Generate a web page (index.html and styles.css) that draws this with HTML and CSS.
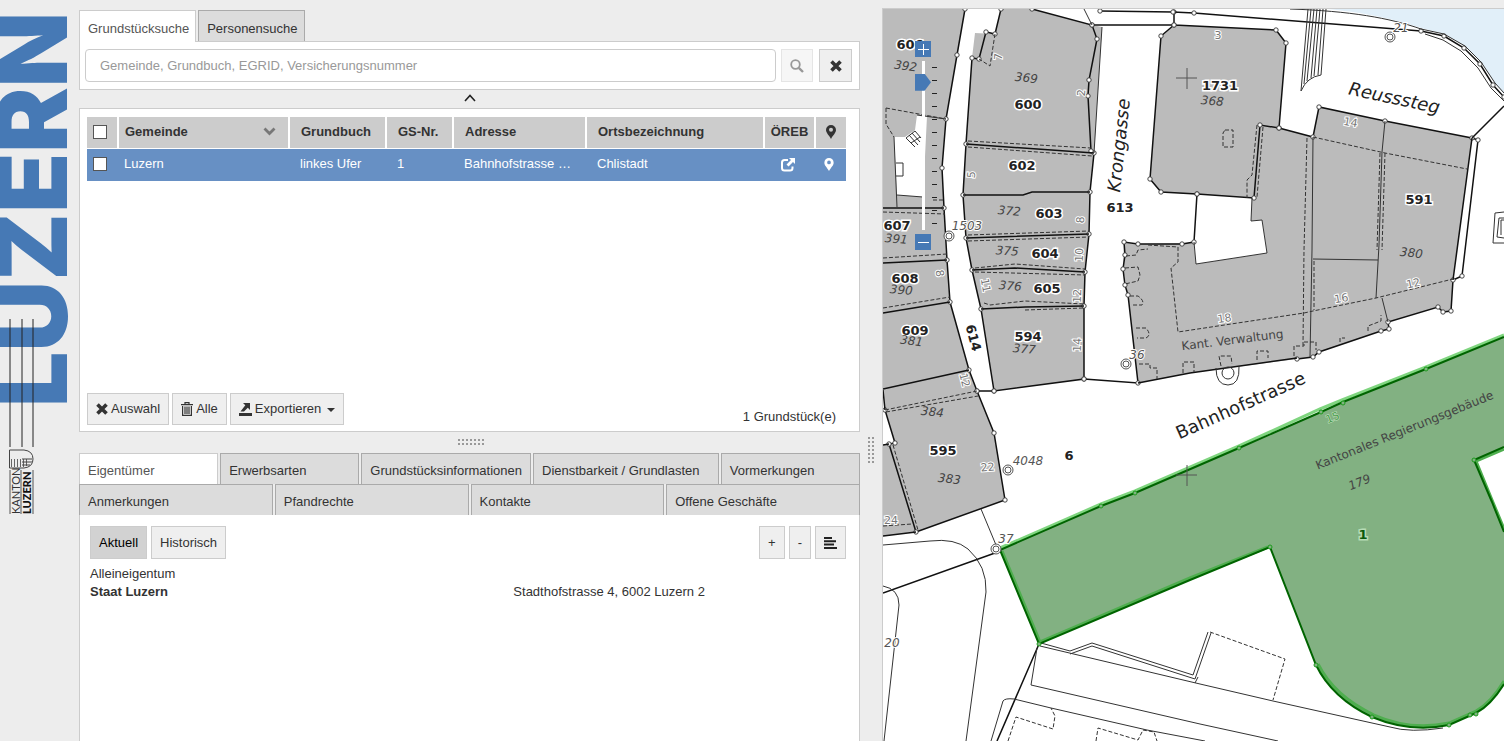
FILE: index.html
```html
<!DOCTYPE html>
<html lang="de">
<head>
	<meta charset="UTF-8">
	<title>Grundstücksuche - Kanton Luzern</title>
	<link rel="stylesheet" href="styles.css">
</head>
<body>
	<div class="page">
		<div class="logo">
			<svg width="79" height="530" viewBox="0 0 79 530" role="img" aria-label="Kanton Luzern">
				<text class="logo-big" transform="translate(67 407) rotate(-90)">LUZERN</text>
				<path d="M10 319V447M22 319V447M33 319V447" stroke="#222" stroke-width="1" fill="none"/>
				<path d="M9.500 450H24Q33 451 33 459Q33 467 24 468H9.500Z" fill="none" stroke="#444"/>
				<path d="M11.500 459V467M14.500 459V467M17.500 459V467M20.500 459V467M23.500 459V467M26.500 459V466" stroke="#666" fill="none"/>
				<path d="M22 459H32M22 462H32M22 465H30" stroke="#444" fill="none"/>
				<path d="M10 470V514M21 470V514M33 470V514" stroke="#555" fill="none"/>
				<text class="logo-thin" transform="translate(20 514) rotate(-90)">KANTON</text>
				<text class="logo-bold" transform="translate(31 514) rotate(-90)">LUZERN</text>
			</svg>
		</div>

		<div class="left">
			<div class="tabs">
				<button class="tab active">Grundstücksuche</button>
				<button class="tab">Personensuche</button>
			</div>
			<form class="search">
				<input type="text" class="search-input" aria-label="Suche" placeholder="Gemeinde, Grundbuch, EGRID, Versicherungsnummer">
				<button type="button" class="btn icon-btn" aria-label="Suchen" disabled>
					<svg width="14" height="14" viewBox="0 0 14 14"><circle cx="5.500" cy="5.500" r="4.300" fill="none" stroke="#333" stroke-width="1.800"/><path d="M8.800 8.800L13 13" stroke="#333" stroke-width="2.400"/></svg>
				</button>
				<button type="button" class="btn icon-btn clear" aria-label="Löschen">
					<svg width="12" height="12" viewBox="0 0 12 12"><path d="M1.500 1.500L10.500 10.500M10.500 1.500L1.500 10.500" stroke="#333" stroke-width="3.600"/></svg>
				</button>
			</form>
			<button class="collapse" aria-label="Suche einklappen">
				<svg width="12" height="8" viewBox="0 0 12 8"><path d="M1 7L6 1.500L11 7" fill="none" stroke="#222" stroke-width="1.600"/></svg>
			</button>

			<div class="results">
				<table class="grid">
					<colgroup>
						<col class="c-check"><col class="c-gem"><col class="c-gb"><col class="c-nr"><col class="c-adr"><col class="c-ort"><col class="c-oreb"><col class="c-pin">
					</colgroup>
					<thead>
						<tr>
							<th class="check"><input type="checkbox" aria-label="Alle auswählen"></th>
							<th class="first">Gemeinde
								<svg class="sort" width="13" height="9" viewBox="0 0 13 9"><path d="M1.500 1.500L6.500 6.500L11.500 1.500" fill="none" stroke="#777" stroke-width="2.800"/></svg>
							</th>
							<th>Grundbuch</th>
							<th>GS-Nr.</th>
							<th>Adresse</th>
							<th>Ortsbezeichnung</th>
							<th class="mid">ÖREB</th>
							<th class="mid"><svg width="10" height="14" viewBox="0 0 10 14"><path fill-rule="evenodd" d="M5 0A5 5 0 0 0 0 5C0 8 3 10 5 14C7 10 10 8 10 5A5 5 0 0 0 5 0ZM5 2.800A2 2 0 1 1 5 6.800A2 2 0 1 1 5 2.800Z" fill="#333"/></svg></th>
						</tr>
					</thead>
					<tbody>
						<tr>
							<td class="check"><input type="checkbox" aria-label="Luzern 1 auswählen"></td>
							<td class="first">Luzern</td>
							<td>linkes Ufer</td>
							<td>1</td>
							<td>Bahnhofstrasse …</td>
							<td>Chlistadt</td>
							<td class="mid"><svg width="14" height="14" viewBox="0 0 14 14"><path d="M7 2H3.500Q1 2 1 4.500V10Q1 12.500 3.500 12.500H9Q11.500 12.500 11.500 10V8.500" fill="none" stroke="#fff" stroke-width="2"/><path d="M8 0H14V6L12 4L7.500 8.500L5.500 6.500L10 2Z" fill="#fff"/></svg></td>
							<td class="mid"><svg width="10" height="13" viewBox="0 0 10 14"><path fill-rule="evenodd" d="M5 0A5 5 0 0 0 0 5C0 8 3 10 5 14C7 10 10 8 10 5A5 5 0 0 0 5 0ZM5 2.800A2 2 0 1 1 5 6.800A2 2 0 1 1 5 2.800Z" fill="#fff"/></svg></td>
						</tr>
					</tbody>
				</table>
				<div class="results-footer">
					<button class="btn">
						<svg width="12" height="12" viewBox="0 0 12 12"><path d="M1.500 1.500L10.500 10.500M10.500 1.500L1.500 10.500" stroke="#333" stroke-width="3.600"/></svg>
						Auswahl
					</button>
					<button class="btn">
						<svg width="12" height="14" viewBox="0 0 12 14"><path d="M4 2V.600H8V2M0 2.600H12M1.600 4V13.300H10.400V4M4 4.500V12M6 4.500V12M8 4.500V12" fill="none" stroke="#333" stroke-width="1.200"/></svg>
						Alle
					</button>
					<button class="btn">
						<svg width="13" height="13" viewBox="0 0 13 13"><path d="M0 10H13V13H0ZM4 0H11V7L8.800 4.800L5 8.600H1.500L6.300 2.300Z" fill="#333"/></svg>
						Exportieren
						<svg class="caret" width="8" height="4" viewBox="0 0 8 4"><path d="M0 0H8L4 4Z" fill="#333"/></svg>
					</button>
					<span class="count">1 Grundstück(e)</span>
				</div>
			</div>

			<div class="split-h"><span class="grip"></span></div>

			<div class="detail-tabs">
				<div class="tab-row row-a">
					<button class="dtab active">Eigentümer</button>
					<button class="dtab">Erwerbsarten</button>
					<button class="dtab">Grundstücksinformationen</button>
					<button class="dtab">Dienstbarkeit / Grundlasten</button>
					<button class="dtab">Vormerkungen</button>
				</div>
				<div class="tab-row row-b">
					<button class="dtab">Anmerkungen</button>
					<button class="dtab">Pfandrechte</button>
					<button class="dtab">Kontakte</button>
					<button class="dtab">Offene Geschäfte</button>
				</div>
			</div>
			<div class="detail">
				<div class="detail-bar">
					<button class="btn pressed">Aktuell</button>
					<button class="btn">Historisch</button>
					<span class="spacer"></span>
					<button class="btn">+</button>
					<button class="btn">-</button>
					<button class="btn" aria-label="Liste">
						<svg width="13" height="12" viewBox="0 0 13 12"><path d="M0 1H8M0 4.300H12M0 7.600H10M0 11H13" stroke="#222" stroke-width="2" fill="none"/></svg>
					</button>
				</div>
				<div class="owner">
					<div>Alleineigentum</div>
					<div class="owner-row"><b>Staat Luzern</b><span>Stadthofstrasse 4, 6002 Luzern 2</span></div>
				</div>
			</div>
		</div>

		<div class="split-v"><span class="grip grip-v"></span></div>

		<div class="map">
			<svg class="plan" viewBox="883 9 621 732" preserveAspectRatio="xMinYMin slice">
				<defs>
					<marker id="pt" markerUnits="userSpaceOnUse" markerWidth="8" markerHeight="8" refX="4" refY="4"><circle cx="4" cy="4" r="2.200" fill="#fff" stroke="#333" stroke-width=".9"/></marker>
				</defs>

				<!-- Reuss -->
				<path class="water" d="M1327 9C1370 13 1395 20 1421 28L1444 34L1465 46L1481 62L1495 83L1504 94V9Z"/>

				<!-- buildings -->
				<path class="house" d="M883 9H965L957 55L946 119L942 168L944 208L947 260L950 302L969 370L977 391L994 433L1005 500L916 532L883 536V445L895 443L885 410L883 390Z"/>
				<path class="house" d="M1001 9L995 34L975 33L972 58L966 144L963 195L966 238L972 270L981 309L994 391L1084 379V306L1085 272L1089 234L1090 192L1094 153L1102 27L1092 25L1032 9Z"/>
				<path class="house" d="M1161 36L1174 25L1276 30L1286 43L1279 128L1313 137L1319 107L1385 121L1472 138L1453 280L1451 311L1443 312L1438 307L1388 322L1389 329L1381 331L1319 352L1313 357L1297 359L1190 373L1138 383L1128 295L1123 269L1124 242L1138 244L1194 243L1196 264L1267 253L1262 220L1251 221L1252 198L1161 192L1150 179Z"/>
				<path class="yard" d="M1197 194L1252 198L1251 221L1262 220L1267 253L1196 264L1194 242Z"/>
				<path class="yard" d="M894 137H905L915 130L917 115L927 116L923 197L897 195Z"/>

				<!-- parcel boundaries -->
				<g class="line pts">
					<path d="M965 9L957 55L946 119L942 168L944 208L947 260L950 302L969 370L977 391L994 433L1005 500L916 532L889 444L895 443L885 410"/>
					<path d="M1001 9L995 34L986 32L979 59L972 58L966 144L963 195L966 238L972 270L981 309L994 391L1084 379V306L1085 272L1089 234L1090 192L1094 153L1091 151L1088 96L1089 80L1097 39L1092 25L1032 9"/>
					<path d="M1092 25H1174L1276 30L1286 43L1279 128L1260 125L1254 198L1197 194L1161 192L1150 179L1161 36L1174 25V12"/>
					<path d="M1279 128L1313 137L1319 107L1385 121L1472 138L1478 140L1462 276L1453 280L1451 311L1443 312L1438 307L1388 322L1389 329L1381 331L1319 352L1313 357L1297 359"/>
					<path d="M1100 11L1173 12L1194 13L1421 31L1444 36L1464 48L1480 64L1493 85L1504 97"/>
					<path d="M977 391L994 391M1084 379L1138 383L1128 295L1125 285L1123 269L1125 255L1124 242L1138 244H1182L1194 242L1197 194"/>
				</g>
				<g class="line">
					<path d="M1138 383L1190 373L1297 358M1472 138L1504 106M1472 138L1453 280"/>
					<path d="M883 208H944M883 263L947 260M883 313L950 302M883 389L969 370M883 390L885 410M883 536L916 532M883 445L889 444"/>
					<path d="M966 144L1094 153M963 195H1023L1032 192H1090M966 238L1089 234M972 270L1015 268L1085 272M981 309L1025 307L1084 306"/>
					<path d="M883 593L995 553M1039 644L997 741"/>
				</g>
				<g class="thin">
					<path d="M1102 27L1094 153M894 137L897 207M897 195L923 197M896 163H903V176H896M917 115L946 119M1092 25L1084 9"/>
					<path d="M1313 137L1312 250L1310 357M1385 121L1382 152L1379 245L1376 298M1313 259L1378 260M1382 298L1388 322"/>
					<path d="M1252 198L1251 221L1262 220L1267 253L1196 264L1194 242"/>
					<path d="M906 138L915 147M909 135L918 145M912 133L920 142M915 131L921 138M906 138L915 131M911 143L920 137"/>
					<path d="M1290 9C1350 11 1390 18 1421 29L1444 34L1465 46L1481 62L1495 83L1504 93"/>
					<path d="M1425 34L1443 40L1461 51L1478 68L1491 88L1504 101"/>
					<path d="M1308 9L1301 91Q1307 77 1321 75L1326 9M1311 9L1304 84M1314 9L1307 81M1317 9L1311 78M1320 9L1314 76M1323 9L1318 75"/>
					<path d="M883 545L930 541Q955 538 968 549Q987 566 986 592L966 741M883 586Q899 589 899 605L884 741M981 509L996 545"/>
					<path d="M1037 648L1031 685L1200 724L1278 741M1041 643L1070 651L1092 643L1193 675L1208 632M1070 654L1092 646L1195 679L1211 633M1040 646L1200 684L1273 701L1390 727Q1410 733 1443 728M1195 683L1198 677"/>
					<path d="M991 741L1003 701Q1005 698 1014 699L1051 708L1147 730L1205 741"/>
					<path d="M1216 368Q1216 385 1228 385Q1240 385 1239 366"/>
					<circle cx="1228" cy="373" r="6"/>
					<path d="M1504 212L1495 213L1493 243H1504M1504 218H1499L1497 237L1504 238M1504 220H1501V235"/>
				</g>
				<g class="dash">
					<path d="M883 212L945 214M883 258L947 254M883 308L950 297M885 410L977 391M886 412L978 396M886 108L946 119M886 108V124L894 137M933 200H943M893 445L918 530M883 526L912 524"/>
					<path d="M995 34L990 66L979 59M968 141L1091 148M968 147L1092 156M968 235L1089 231M968 241L1089 237M975 268L1015 264L1085 269M975 272L1085 275M984 303L990 305L1025 301L1084 304M1025 310L1084 308"/>
					<path d="M1257 125L1252 175L1247 180V198M1263 127L1257 197M1225 130H1233V147H1223V133ZM1307 138L1304 250L1303 345M1380 153L1377 250M1385 153L1382 250M1313 137L1385 153L1467 169M1314 261V310"/>
					<path d="M1148 245L1178 247V262L1171 268L1178 332L1304 313L1313 311L1376 298L1453 279"/>
					<path d="M1126 256L1136 255L1138 250L1148 249M1125 268L1138 267L1140 275L1138 281L1125 284M1130 296H1138Q1145 301 1142 305H1131M1136 328H1146Q1152 335 1146 338H1137M1139 364H1150V368H1157V379M1183 373V362H1194V372M1221 366L1219 356H1231L1232 364M1257 360V351H1268V358M1294 356V346H1304V342H1316V350M1368 331V326L1381 321V315M1340 342V338H1345"/>
					<path d="M1210 632L1285 659L1273 700M1008 741L1016 717L1053 729L1055 716L1051 708M1096 741L1098 728L1138 740L1143 730L1154 732L1157 741"/>
				</g>

				<!-- selected parcel -->
				<path class="sel" d="M1000 550L1101 506L1135 493L1239 448L1321 412L1343 402L1426 369L1504 337L1520 330V440L1504 447L1474 460L1492 502L1504 532L1520 570V665L1504 683Q1491 705 1476 713L1449 725Q1410 733 1372 717Q1332 698 1316 665L1270 547L1190 580L1039 644Z"/>
				<path class="sel-glow" d="M1000 548L1101 504L1135 491L1239 446L1320 409L1342 400L1426 367L1504 335"/>
				<path class="sel-glow inner" d="M1504 449L1476 461L1492 500L1504 529M1504 681Q1491 703 1476 711L1449 723Q1410 731 1374 715Q1334 696 1318 664M1268 547L1190 578L1040 642L1002 551"/>
				<path class="sel-line" d="M1504 532L1492 502L1474 460L1504 447M1504 337L1426 369L1343 402L1321 412L1239 448L1135 493L1101 506L1000 550L1039 644L1190 580L1270 547L1316 665Q1332 698 1372 717Q1410 733 1449 725L1476 713Q1491 705 1504 684"/>
				<g class="sel-pts">
					<circle cx="1101" cy="506" r="2"/><circle cx="1135" cy="493" r="2"/><circle cx="1239" cy="448" r="2"/><circle cx="1321" cy="412" r="2"/><circle cx="1343" cy="403" r="2"/><circle cx="1426" cy="369" r="2"/><circle cx="1474" cy="460" r="2"/><circle cx="1270" cy="547" r="2"/><circle cx="1316" cy="665" r="2"/><circle cx="1372" cy="717" r="2"/><circle cx="1449" cy="725" r="2"/><circle cx="1470" cy="715" r="2"/><circle cx="1476" cy="714" r="2"/><circle cx="1039" cy="644" r="2"/>
				</g>
				<path class="cross" d="M1176 78H1197M1187 68V89M1176 475H1197M1187 465V486"/>

				<!-- survey points -->
				<g class="survey">
					<circle cx="949" cy="236" r="5"/><circle cx="949" cy="236" r="3"/>
					<circle cx="1126" cy="364" r="5"/><circle cx="1126" cy="364" r="3"/>
					<circle cx="1008" cy="470" r="5"/><circle cx="1008" cy="470" r="3"/>
					<circle cx="996" cy="549" r="5"/><circle cx="996" cy="549" r="3"/>
					<circle cx="1390" cy="37" r="5"/><circle cx="1390" cy="37" r="3"/>
				</g>

				<g class="parcel">
					<text x="910" y="49">606</text><text x="1028" y="109">600</text><text x="1022" y="170">602</text>
					<text x="1049" y="218">603</text><text x="1045" y="258">604</text><text x="1047" y="293">605</text>
					<text x="1028" y="341">594</text><text x="897" y="230">607</text><text x="905" y="283">608</text>
					<text x="915" y="335">609</text><text x="943" y="455">595</text><text x="1220" y="90">1731</text>
					<text x="1120" y="212">613</text><text x="1419" y="204">591</text><text x="1069" y="460">6</text>
					<text transform="translate(969 339) rotate(75)">614</text>
				</g>
				<text class="parcel-sel" x="1363" y="539">1</text>

				<g class="no">
					<text transform="translate(905 70) rotate(8)">392</text><text transform="translate(1026 82) rotate(6)">369</text>
					<text transform="translate(1009 215) rotate(5)">372</text><text transform="translate(1007 255) rotate(4)">375</text>
					<text transform="translate(1010 290) rotate(5)">376</text><text transform="translate(1024 353) rotate(5)">377</text>
					<text transform="translate(896 243) rotate(5)">391</text><text transform="translate(901 294) rotate(5)">390</text>
					<text transform="translate(911 345) rotate(7)">381</text><text transform="translate(932 416) rotate(6)">384</text>
					<text transform="translate(949 483) rotate(6)">383</text><text transform="translate(1212 105) rotate(5)">368</text>
					<text transform="translate(1411 257) rotate(6)">380</text><text transform="translate(1361 486) rotate(-22)">179</text>
				</g>
				<g class="survey-no">
					<text x="967" y="230">1503</text><text x="1137" y="359">36</text><text x="1028" y="465">4048</text><text x="1006" y="543">37</text><text x="1401" y="32">21</text><text x="892" y="647">20</text>
				</g>
				<g class="addr">
					<text transform="translate(1002 57) rotate(-85)">7</text><text transform="translate(1085 93) rotate(-85)">2</text>
					<text transform="translate(975 175) rotate(-85)">5</text><text transform="translate(1084 220) rotate(-88)">8</text>
					<text transform="translate(1083 255) rotate(-88)">10</text><text transform="translate(1081 296) rotate(-88)">12</text>
					<text transform="translate(1081 345) rotate(-88)">14</text><text transform="translate(982 286) rotate(80)">11</text>
					<text transform="translate(936 274) rotate(80)">8</text><text transform="translate(961 381) rotate(75)">12</text>
					<text transform="translate(988 471) rotate(-5)">22</text><text x="891" y="524">24</text>
					<text x="1218" y="39">3</text><text transform="translate(1350 126) rotate(10)">14</text>
					<text transform="translate(1225 322) rotate(-8)">18</text><text transform="translate(1342 302) rotate(-10)">16</text>
					<text transform="translate(1414 287) rotate(-12)">12</text>
				</g>
				<text class="addr-sel" transform="translate(1334 421) rotate(-22)">15</text>

				<g class="name">
					<text transform="translate(1233 344) rotate(-7)">Kant. Verwaltung</text>
					<text transform="translate(1406 434) rotate(-22)">Kantonales Regierungsgebäude</text>
				</g>
				<g class="street">
					<text transform="translate(1125 146) rotate(-84)">Krongasse</text>
					<text transform="translate(1393 104) rotate(12)">Reusssteg</text>
					<text class="upright" transform="translate(1243 411) rotate(-24)">Bahnhofstrasse</text>
				</g>
			</svg>

			<div class="zoom">
				<button class="zoom-btn" aria-label="Vergrössern"><svg width="11" height="11" viewBox="0 0 11 11"><path d="M5.500 0V11M0 5.500H11" stroke="#fff"/></svg></button>
				<div class="zoom-slider">
					<input type="range" min="0" max="12" value="1" aria-label="Zoomstufe">
					<span class="ticks"></span>
				</div>
				<button class="zoom-btn" aria-label="Verkleinern"><svg width="11" height="11" viewBox="0 0 11 11"><path d="M0 5.500H11" stroke="#fff"/></svg></button>
			</div>
		</div>
	</div>
</body>
</html>
```

FILE: styles.css
```css
* {
	box-sizing: border-box;
}
body {
	margin: 0;
	background-color: #ededed;
	color: #333;
	font-family: "Liberation Sans", Arial, sans-serif;
	font-size: 13px;
	line-height: 18px;
}
button, input {
	font: inherit;
	color: inherit;
}
button {
	cursor: pointer;
}
.page {
	display: grid;
	grid-template-columns: 79px minmax(0, 781fr) 22px minmax(0, 622fr);
	height: 100vh;
	overflow: hidden;
}

/* logo */
.logo svg {
	display: block;
}
.logo-big {
	font-family: Inter, sans-serif;
	font-weight: 900;
	font-size: 98px;
	fill: #4679b5;
}
.logo-thin, .logo-bold {
	font-family: Lato, sans-serif;
	font-size: 11px;
	fill: #333;
}
.logo-bold {
	font-weight: 900;
	fill: #111;
}

/* left side */
.left {
	display: flex;
	flex-direction: column;
	padding-top: 10px;
	min-height: 0;
}
.tabs {
	display: flex;
	gap: 2px;
}
.tab {
	height: 32px;
	padding: 4px 6px 0 8px;
	border: 1px solid #aaa;
	border-bottom: 0;
	background-color: #dcdcdc;
}
.tab.active, .dtab.active {
	position: relative;
	border-color: #ccc;
	background-color: #fff;
	color: #555;
}
.tab.active {
	margin-bottom: -1px;
}
.search {
	display: flex;
	padding: 7px 7px 7px 5px;
	border: 1px solid #ccc;
	background-color: #fff;
	margin-top: -1px;
}
.search-input {
	flex: 1;
	height: 33px;
	padding: 0 14px;
	border: 1px solid #ccc;
	border-radius: 4px;
	background-color: #fff;
}
.search-input::placeholder {
	color: #999;
}
.btn {
	display: flex;
	align-items: center;
	justify-content: center;
	gap: 3px;
	height: 33px;
	padding: 0 8px;
	border: 1px solid #ccc;
	background-color: #efefef;
}
.btn.pressed {
	background-color: #d2d2d2;
	color: #000;
}
.icon-btn {
	width: 32px;
	margin-left: 5px;
	padding: 0;
}
.icon-btn.clear {
	width: 33px;
	margin-left: 6px;
}
.icon-btn:disabled {
	opacity: .5;
}
.collapse {
	flex: none;
	height: 18px;
	padding: 0 0 2px;
	border: 0;
	background: none;
	line-height: 10px;
}

/* result grid */
.results {
	flex: 325 1 0;
	display: flex;
	flex-direction: column;
	min-height: 0;
	padding: 8px 13px 5px 7px;
	border: 1px solid #ccc;
	background-color: #fff;
}
.grid {
	width: 100%;
	table-layout: fixed;
	border-collapse: separate;
	border-spacing: 0;
}
.c-check { width: 32px; }
.c-gem { width: 171px; }
.c-gb { width: 97px; }
.c-nr { width: 67px; }
.c-adr { width: 133px; }
.c-oreb { width: 51px; }
.c-pin { width: 30px; }
.grid th, .grid td {
	height: 32px;
	padding: 0 0 2px 11px;
	text-align: left;
	white-space: nowrap;
	overflow: hidden;
}
.grid th {
	border-right: 2px solid #fff;
	border-bottom: 1px solid #fff;
	background-color: #ccc;
	background-clip: padding-box;
}
.grid th:last-child {
	border-right: 0;
}
.grid td {
	padding-left: 10px;
	background-color: #6790c4;
	color: #fff;
}
.grid .first {
	padding-left: 6px;
}
.grid td.first {
	padding-left: 5px;
}
.grid .check {
	padding-left: 6px;
}
.grid .mid {
	padding-left: 0;
	text-align: center;
}
.grid td.mid {
	padding-right: 5px;
}
.grid svg {
	vertical-align: middle;
}
.grid .sort {
	float: right;
	margin: 4px 12px 0 0;
}
.grid input {
	display: block;
	appearance: none;
	width: 14px;
	height: 14px;
	margin: 0;
	border: 1px solid #555;
	background-color: #fff;
}
.results-footer {
	display: flex;
	gap: 3px;
	margin-top: auto;
}
.results-footer .btn {
	height: 32px;
}
.caret {
	margin: 2px 0 0 3px;
}
.count {
	margin: 15px 10px 0 auto;
}

/* splitters */
.split-h {
	flex: none;
	height: 21px;
	display: flex;
	align-items: center;
	justify-content: center;
}
.split-v {
	display: flex;
	justify-content: center;
	padding: 437px 2px 0 0;
}
.grip {
	width: 28px;
	height: 8px;
	background: conic-gradient(from 90deg at 2px 2px, transparent 270deg, #999 0) 0 0 / 4px 4px;
}
.grip-v {
	width: 8px;
	height: 28px;
}

/* details */
.tab-row {
	display: grid;
	gap: 2px;
}
.row-a {
	grid-template-columns: 140fr 140fr 166fr 187fr 140fr;
}
.row-b {
	grid-template-columns: repeat(4, 1fr);
}
.dtab {
	height: 31px;
	padding: 4px 8px 0;
	border: 1px solid #aaa;
	border-bottom: 0;
	background-color: #dcdcdc;
	text-align: left;
	white-space: nowrap;
}
.detail {
	flex: 226 1 0;
	padding: 11px 13px 0 10px;
	border: 1px solid #ccc;
	border-width: 0 1px;
	background-color: #fff;
}
.detail-bar {
	display: flex;
	gap: 4px;
}
.spacer {
	flex: 1;
}
.owner {
	margin-top: 6px;
}
.owner-row {
	display: grid;
	grid-template-columns: 56% 1fr;
}

/* map */
.map {
	position: relative;
	margin-top: 8px;
	border: 1px solid #ccc;
	border-width: 1px 0 0 1px;
	background-color: #fff;
	overflow: hidden;
}
.plan {
	display: block;
	width: 100%;
	height: 100%;
}
.plan text {
	font-family: "DejaVu Sans", sans-serif;
	text-anchor: middle;
}
.water { fill: #e1eff9; }
.house { fill: #bbb; }
.yard { fill: #fff; }
.line, .thin, .dash {
	fill: none;
	stroke: #111;
	stroke-width: 1.5;
}
.thin, .dash {
	stroke: #333;
	stroke-width: 1;
}
.dash {
	stroke-dasharray: 4 2;
}
.pts path {
	marker: url(#pt);
}
.sel {
	fill: #82b182;
}
.sel-line {
	fill: none;
	stroke: #006400;
	stroke-width: 2;
}
.sel-glow {
	fill: none;
	stroke: #7fd57f;
	stroke-width: 3;
}
.sel-glow.inner {
	stroke: #4fae4f;
}
.sel-pts {
	fill: #82b182;
	stroke: #1d9a1d;
}
.cross {
	fill: none;
	stroke: #555;
}
.survey circle {
	fill: #fff;
	stroke: #555;
}
.parcel {
	font-size: 13px;
	font-weight: bold;
	fill: #222;
	stroke: #fff;
	stroke-width: 3px;
	paint-order: stroke;
}
.parcel-sel {
	font-size: 13px;
	font-weight: bold;
	fill: #0b5a0b;
	stroke: #b6dcb6;
	stroke-width: 3px;
	paint-order: stroke;
}
.no {
	font-size: 12px;
	font-style: italic;
	fill: #444;
}
.survey-no, .addr {
	font-size: 12px;
	font-style: italic;
	fill: #555;
	stroke: #fff;
	stroke-width: 2px;
	paint-order: stroke;
}
.addr {
	font-size: 11px;
	font-style: normal;
	fill: #777;
}
.addr-sel {
	font-size: 11px;
	fill: #4c9a4c;
	stroke: #c2e6c2;
	paint-order: stroke;
}
.name {
	font-size: 12px;
	fill: #444;
}
.street {
	font-size: 18px;
	font-style: italic;
	fill: #222;
}
.upright {
	font-style: normal;
}
.zoom {
	position: absolute;
	top: 32px;
	left: 32px;
	display: flex;
	flex-direction: column;
	align-items: flex-start;
	gap: 4px;
}
.zoom-btn {
	display: flex;
	align-items: center;
	justify-content: center;
	width: 16px;
	height: 16px;
	padding: 0;
	border: 0;
	background-color: #4679b5;
}
.zoom-slider {
	display: flex;
	align-items: center;
	gap: 1px;
}
.zoom-slider input {
	appearance: none;
	writing-mode: vertical-lr;
	width: 16px;
	height: 169px;
	margin: 0;
	background: linear-gradient(#fff, #fff) 50% 0 / 3px 100% no-repeat;
}
.zoom-slider input::-webkit-slider-thumb {
	appearance: none;
	width: 16px;
	height: 17px;
	background-color: #4679b5;
	clip-path: polygon(0 0, 60% 0, 100% 50%, 60% 100%, 0 100%);
}
.ticks {
	width: 5px;
	height: 157px;
	background: repeating-linear-gradient(#222 0 1px, transparent 1px 13px);
}
```
